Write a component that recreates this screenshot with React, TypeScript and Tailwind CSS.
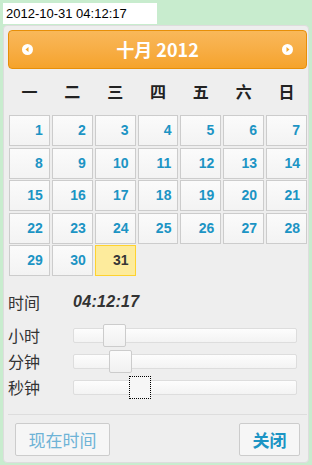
const weekdays = ["一", "二", "三", "四", "五", "六", "日"];
const days = Array.from({ length: 31 }, (_, i) => i + 1);

const cjk = "font-['Noto_Sans_CJK_SC',sans-serif]";

const sliders = [
  { label: "小时", left: 29, focus: false },
  { label: "分钟", left: 35, focus: false },
  { label: "秒钟", left: 55, focus: true },
];

const Arrow = ({ dir }: { dir: "left" | "right" }) => (
  <svg width="11" height="11" viewBox="0 0 11 11">
    <circle cx="5.5" cy="5.5" r="5.5" fill="#fff" />
    {dir === "left" ? (
      <path d="M3.5 5.5 L6.5 3 L6.5 8 Z" fill="#f6a828" />
    ) : (
      <path d="M7.5 5.5 L4.5 3 L4.5 8 Z" fill="#f6a828" />
    )}
  </svg>
);

const App = () => {
  return (
    <div className="w-[312px] h-[465px] bg-[#c8ecce] pt-[3px] pl-[3px] overflow-hidden">
      <div className="w-[154px] h-[21px] bg-white pl-[3px] text-[13px] leading-[21px] text-black font-['Liberation_Sans',Arial,sans-serif]">
        2012-10-31 04:12:17
      </div>

      <div className="mt-[1px] w-[306px] h-[438px] bg-[#eeeeee] border border-[#dddddd] rounded-[4px] pt-[4px] pl-[4px] pr-[1px] text-[#333333]">
        {/* header */}
        <div className="h-[39px] w-[299px] rounded-[4px] border border-[#e78f08] bg-gradient-to-b from-[#f9b85a] to-[#f5a32a] flex items-center justify-between px-[13px]">
          <Arrow dir="left" />
          <span className={`text-white font-bold text-[18px] ${cjk}`}>十月 2012</span>
          <Arrow dir="right" />
        </div>

        {/* weekdays */}
        <div className="mt-[10px] h-[24px] grid grid-cols-7 gap-x-[2px] pl-[1px] w-[299px]">
          {weekdays.map((w) => (
            <div key={w} className={`flex items-center justify-center text-[16px] font-semibold text-[#222] ${cjk}`}>
              {w}
            </div>
          ))}
        </div>

        {/* days */}
        <div className="mt-[12px] grid grid-cols-7 gap-x-[2px] gap-y-[1.5px] pl-[1px] w-[299px] font-['Liberation_Sans',Arial,sans-serif]">
          {days.map((d) => (
            <div
              key={d}
              className={
                d === 31
                  ? "h-[31px] border border-[#fed22f] bg-[#fdeb9c] text-[#363636] font-bold text-[14px] flex items-center justify-end pr-[6px]"
                  : "h-[31px] border border-[#cccccc] bg-gradient-to-b from-[#fbfbfb] to-[#f3f3f3] text-[#1c94c4] font-bold text-[14px] flex items-center justify-end pr-[6px]"
              }
            >
              {d}
            </div>
          ))}
        </div>

        {/* time */}
        <div className="mt-[13px] flex items-center h-[26px]">
          <span className={`w-[65px] text-[16px] text-[#333] ${cjk}`}>时间</span>
          <span className="text-[16px] font-bold italic text-[#333] font-['Liberation_Sans',Arial,sans-serif] tracking-[0.3px]">
            04:12:17
          </span>
        </div>
        <div className="mt-[7px] flex flex-col">
          {sliders.map((s) => (
            <div key={s.label} className="flex items-center h-[26px]">
              <span className={`w-[65px] text-[16px] text-[#333] ${cjk}`}>{s.label}</span>
              <div className="relative w-[224px] h-[15px] border border-[#dddddd] bg-gradient-to-b from-[#fdfdfd] to-[#f3f3f3] rounded-[2px]">
                <div
                  className={
                    s.focus
                      ? "absolute top-[-5px] w-[22px] h-[23px] border border-dotted border-black bg-[#f6f6f6]"
                      : "absolute top-[-5px] w-[23px] h-[23px] border border-[#cccccc] bg-gradient-to-b from-[#fbfbfb] to-[#f1f1f1] rounded-[2px]"
                  }
                  style={{ left: s.left }}
                />
              </div>
            </div>
          ))}
        </div>

        {/* footer */}
        <div className="mt-[14px] w-[299px] border-t border-[#dddddd] pt-[8px] px-[7px] flex justify-between">
          <button className={`w-[95px] h-[33px] border border-[#cccccc] bg-[#f6f6f6] rounded-[2px] text-[17px] text-[#6eb3d6] ${cjk}`}>
            现在时间
          </button>
          <button className={`w-[61px] h-[33px] border border-[#cccccc] bg-[#f6f6f6] rounded-[2px] text-[17px] font-bold text-[#1c94c4] ${cjk}`}>
            关闭
          </button>
        </div>
      </div>
    </div>
  );
};

export default App;
